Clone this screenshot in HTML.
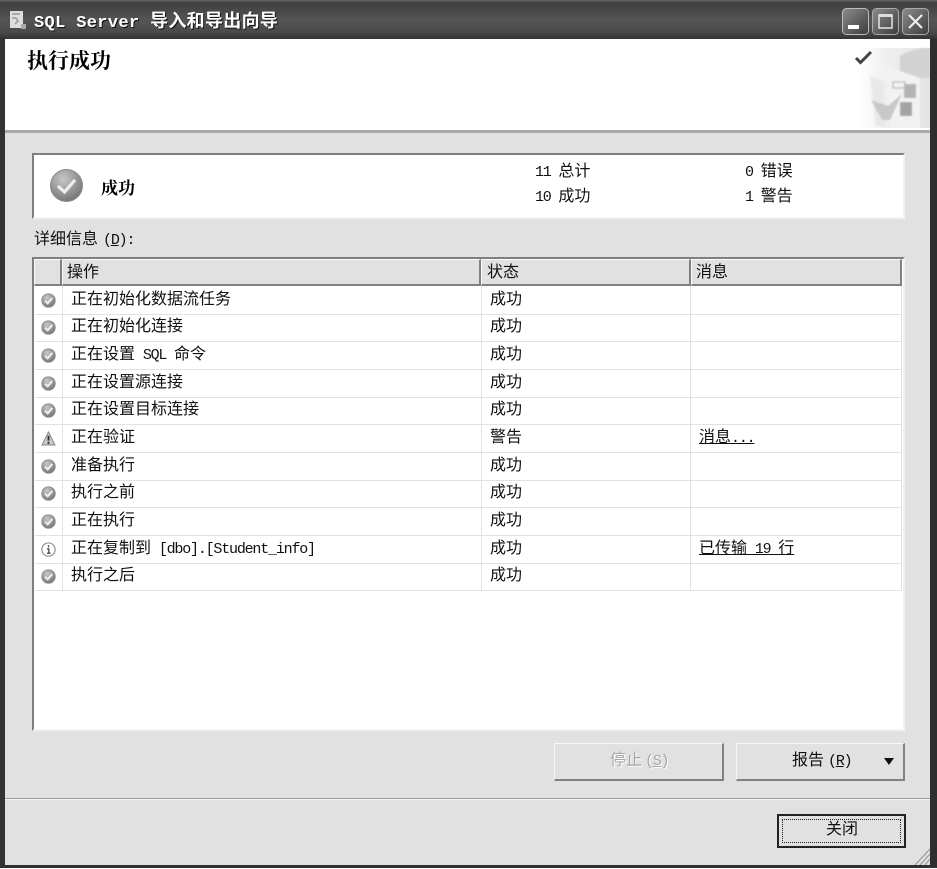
<!DOCTYPE html>
<html><head><meta charset="utf-8">
<style>
html,body{margin:0;padding:0;background:#fff;}
#w{position:relative;width:937px;height:869px;overflow:hidden;background:#e1e1e1;font-family:"Liberation Mono","WenQuanYi Zen Hei","Noto Sans CJK SC",monospace;font-size:16px;line-height:18px;color:#111;}
.a{position:absolute;}
.t{position:absolute;white-space:pre;font-size:16px;height:18px;}
.l{font-size:15px;letter-spacing:-1.2px;}
.hl{position:absolute;left:35px;width:866px;height:1px;background:#e2e2e2;}
.ic{position:absolute;left:41px;width:15px;height:15px;}
.h{position:absolute;top:259px;height:27px;background:#e1e1e1;box-sizing:border-box;border-top:1px solid #fafafa;border-left:1px solid #fafafa;border-right:2px solid #808080;border-bottom:2px solid #808080;}
u{text-decoration:underline;}
</style></head><body>
<div id="w">
<svg width="0" height="0" style="position:absolute"><defs>
<radialGradient id="g" cx="40%" cy="30%" r="80%"><stop offset="0" stop-color="#c8c8c8"/><stop offset="1" stop-color="#6c6c6c"/></radialGradient>
<g id="ok"><circle cx="7" cy="7" r="6.3" fill="url(#g)" stroke="#8a8a8a" stroke-width=".8"/><path d="M3.8 7.2 6.2 9.6 10.6 4.6" fill="none" stroke="#f0f0f0" stroke-width="1.8"/></g>
</defs></svg>
<!-- frame -->
<div class="a" style="left:0;top:0;width:937px;height:39px;background:linear-gradient(#666 0,#3f3f3f 3px,#454545 8px,#555 20px,#4a4a4a 32px,#333 39px);"></div>
<div class="a" style="left:0;top:39px;width:5px;height:829px;background:#333;"></div>
<div class="a" style="right:0;top:39px;width:7px;height:829px;background:#2e2e2e;"></div>
<div class="a" style="left:0;top:865px;width:937px;height:3px;background:#303030;"></div>
<div class="a" style="left:0;top:868px;width:937px;height:1px;background:#fff;"></div>
<!-- titlebar -->
<svg class="a" style="left:9px;top:10px" width="18" height="20"><rect x="1" y="1" width="13" height="17" fill="#ddd"/><path d="M3 4h8M3 8h4l2 3-3 3" stroke="#999" fill="none" stroke-width="1.5"/><rect x="12" y="14" width="5" height="5" fill="#aaa"/></svg>
<div class="t" style="left:34px;top:13px;color:#fff;font-weight:bold;font-size:18px;line-height:20px;letter-spacing:.3px;text-shadow:1px 1px 0 #111;"><span style="font-size:17px;letter-spacing:.35px">SQL Server </span>导入和导出向导</div>
<!-- buttons -->
<svg class="a" style="left:840px;top:7px" width="90" height="30">
<defs><linearGradient id="b" x1="0" y1="0" x2="1" y2="1"><stop offset="0" stop-color="#8c8c8c"/><stop offset="1" stop-color="#3c3c3c"/></linearGradient></defs>
<rect x="2.5" y="1.5" width="26" height="26" rx="4" fill="url(#b)" stroke="#bbb" stroke-width="1"/>
<rect x="8" y="18" width="11" height="4" fill="#fff"/>
<rect x="32.5" y="1.5" width="26" height="26" rx="4" fill="url(#b)" stroke="#aaa" stroke-width="1"/>
<rect x="39" y="8" width="13" height="13" fill="none" stroke="#ddd" stroke-width="1.6"/><rect x="39" y="7" width="13" height="3" fill="#ddd"/>
<rect x="62.5" y="1.5" width="26" height="26" rx="4" fill="url(#b)" stroke="#aaa" stroke-width="1"/>
<path d="M69 8 82 21M82 8 69 21" stroke="#eee" stroke-width="2.2"/>
</svg>
<!-- header white -->
<div class="a" style="left:5px;top:39px;width:925px;height:91px;background:#fff;"></div>
<div class="a" style="left:5px;top:130px;width:925px;height:3px;background:#aaa;"></div>
<div class="t" style="left:27px;top:50px;font-size:21px;line-height:21px;font-weight:bold;color:#000;font-family:'Noto Serif CJK SC','Liberation Serif',serif;">执行成功</div>
<!-- logo -->
<svg class="a" style="left:854px;top:46px" width="76" height="82">
<defs><linearGradient id="lg" x1="0" x2="1"><stop offset="0" stop-color="#fff"/><stop offset=".4" stop-color="#efefef"/><stop offset="1" stop-color="#e4e4e4"/></linearGradient><filter id="bl"><feGaussianBlur stdDeviation="0.8"/></filter></defs>
<rect x="4" y="2" width="72" height="80" fill="url(#lg)"/>
<g filter="url(#bl)">
<path d="M46 10 Q60 2 76 2 V32 H46 Z" fill="#d2d2d2"/>
<path d="M32 20 66 32 V82 H36 Z" fill="#f2f2f2"/>
<path d="M16 30 30 36 32 80 22 80 Z" fill="#e8e8e8"/>
<path d="M17 54 34 60 48 48 36 74 28 74Z" fill="#c8c8c8"/>
<rect x="39" y="36" width="12" height="6" fill="none" stroke="#aaa"/><rect x="50" y="38" width="12" height="14" fill="#b4b4b4"/>
<rect x="46" y="56" width="12" height="14" fill="#a4a4a4"/>
</g>
<path d="M2 12 6.5 16.5 17 6" fill="none" stroke="#444" stroke-width="3"/>
</svg>
<!-- summary -->
<div class="a" style="left:32px;top:153px;width:873px;height:66px;background:#fff;box-sizing:border-box;border-top:2px solid #7f7f7f;border-left:2px solid #7f7f7f;border-right:2px solid #f2f2f2;border-bottom:2px solid #f2f2f2;"></div>
<svg class="a" style="left:49px;top:168px" width="36" height="36"><circle cx="17.5" cy="17.5" r="16" fill="url(#g)" stroke="#8a8a8a"/><path d="M9 18 15.5 24 26 12" fill="none" stroke="#eee" stroke-width="3.2"/></svg>
<div class="t" style="left:101px;top:178px;font-size:17px;font-weight:bold;font-family:'Noto Serif CJK SC',serif;color:#000;">成功</div>
<div class="t" style="left:535px;top:163px;"><span class="l">11 </span>总计</div>
<div class="t" style="left:535px;top:188px;"><span class="l">10 </span>成功</div>
<div class="t" style="left:745px;top:163px;"><span class="l">0 </span>错误</div>
<div class="t" style="left:745px;top:188px;"><span class="l">1 </span>警告</div>
<div class="t" style="left:34px;top:231px;">详细信息<span class="l" style="margin-left:5px">(<u>D</u>):</span></div>
<!-- table -->
<div class="a" style="left:32px;top:257px;width:873px;height:474px;background:#fff;box-sizing:border-box;border-top:2px solid #7f7f7f;border-left:2px solid #7f7f7f;border-right:2px solid #f2f2f2;border-bottom:2px solid #f2f2f2;"></div>
<div class="h" style="left:34px;width:28px;"></div>
<div class="h" style="left:62px;width:419px;"></div>
<div class="h" style="left:481px;width:210px;"></div>
<div class="h" style="left:691px;width:211px;"></div>
<div class="t" style="left:67px;top:264px;">操作</div>
<div class="t" style="left:487px;top:264px;">状态</div>
<div class="t" style="left:696px;top:264px;">消息</div>
<div class="a" style="left:62px;top:286px;width:1px;height:305px;background:#e2e2e2;"></div>
<div class="a" style="left:481px;top:286px;width:1px;height:305px;background:#e2e2e2;"></div>
<div class="a" style="left:690px;top:286px;width:1px;height:305px;background:#e2e2e2;"></div>
<div class="a" style="left:901px;top:286px;width:1px;height:305px;background:#e2e2e2;"></div>
<div class="hl" style="top:314px"></div><div class="hl" style="top:341px"></div><div class="hl" style="top:369px"></div><div class="hl" style="top:397px"></div><div class="hl" style="top:424px"></div><div class="hl" style="top:452px"></div><div class="hl" style="top:480px"></div><div class="hl" style="top:507px"></div><div class="hl" style="top:535px"></div><div class="hl" style="top:563px"></div><div class="hl" style="top:590px"></div>
<!-- icons -->
<svg class="ic" viewBox="0 0 14 14" style="top:293px"><use href="#ok"/></svg>
<svg class="ic" viewBox="0 0 14 14" style="top:320px"><use href="#ok"/></svg>
<svg class="ic" viewBox="0 0 14 14" style="top:348px"><use href="#ok"/></svg>
<svg class="ic" viewBox="0 0 14 14" style="top:376px"><use href="#ok"/></svg>
<svg class="ic" viewBox="0 0 14 14" style="top:403px"><use href="#ok"/></svg>
<svg class="ic" viewBox="0 0 14 14" style="top:431px"><path d="M7 1 13 13H1Z" fill="#ccc" stroke="#888"/><path d="M7 4.5V9M7 10v2" stroke="#333" stroke-width="1.8"/></svg>
<svg class="ic" viewBox="0 0 14 14" style="top:459px"><use href="#ok"/></svg>
<svg class="ic" viewBox="0 0 14 14" style="top:486px"><use href="#ok"/></svg>
<svg class="ic" viewBox="0 0 14 14" style="top:514px"><use href="#ok"/></svg>
<svg class="ic" viewBox="0 0 14 14" style="top:542px"><circle cx="7" cy="7" r="6.2" fill="#fff" stroke="#888"/><path d="M7 3v2M5.5 6.5H7.3V10.5M5.5 10.5h3.5" stroke="#444" stroke-width="1.2" fill="none"/></svg>
<svg class="ic" viewBox="0 0 14 14" style="top:569px"><use href="#ok"/></svg>
<!-- rows -->
<div class="t" style="left:71px;top:291px;">正在初始化数据流任务</div><div class="t" style="left:490px;top:291px;">成功</div>
<div class="t" style="left:71px;top:318px;">正在初始化连接</div><div class="t" style="left:490px;top:318px;">成功</div>
<div class="t" style="left:71px;top:346px;">正在设置<span class="l"> SQL </span>命令</div><div class="t" style="left:490px;top:346px;">成功</div>
<div class="t" style="left:71px;top:374px;">正在设置源连接</div><div class="t" style="left:490px;top:374px;">成功</div>
<div class="t" style="left:71px;top:401px;">正在设置目标连接</div><div class="t" style="left:490px;top:401px;">成功</div>
<div class="t" style="left:71px;top:429px;">正在验证</div><div class="t" style="left:490px;top:429px;">警告</div><div class="t" style="left:699px;top:429px;"><u>消息<span class="l">...</span></u></div>
<div class="t" style="left:71px;top:457px;">准备执行</div><div class="t" style="left:490px;top:457px;">成功</div>
<div class="t" style="left:71px;top:484px;">执行之前</div><div class="t" style="left:490px;top:484px;">成功</div>
<div class="t" style="left:71px;top:512px;">正在执行</div><div class="t" style="left:490px;top:512px;">成功</div>
<div class="t" style="left:71px;top:540px;">正在复制到<span class="l"> [dbo].[Student_info]</span></div><div class="t" style="left:490px;top:540px;">成功</div><div class="t" style="left:699px;top:540px;"><u>已传输<span class="l"> 19 </span>行</u></div>
<div class="t" style="left:71px;top:567px;">执行之后</div><div class="t" style="left:490px;top:567px;">成功</div>
<!-- buttons -->
<div class="a" style="left:554px;top:743px;width:170px;height:38px;box-sizing:border-box;background:#e1e1e1;border-top:1px solid #f6f6f6;border-left:1px solid #f6f6f6;border-right:2px solid #808080;border-bottom:2px solid #808080;"></div>
<div class="t" style="left:610px;top:752px;color:#a6a6a6;text-shadow:1px 1px 0 #fff;">停止<span class="l" style="margin-left:3px">(<u>S</u>)</span></div>
<div class="a" style="left:736px;top:743px;width:169px;height:38px;box-sizing:border-box;background:#e1e1e1;border-top:1px solid #f6f6f6;border-left:1px solid #f6f6f6;border-right:2px solid #808080;border-bottom:2px solid #808080;"></div>
<div class="t" style="left:792px;top:752px;color:#111;">报告<span class="l" style="margin-left:4px">(<u>R</u>)</span></div>
<svg class="a" style="left:883px;top:757px" width="12" height="9"><path d="M1 1H11L6 8Z" fill="#111"/></svg>
<div class="a" style="left:5px;top:798px;width:925px;height:1px;background:#9a9a9a;"></div>
<div class="a" style="left:5px;top:799px;width:925px;height:1px;background:#f4f4f4;"></div>
<div class="a" style="left:777px;top:814px;width:129px;height:34px;box-sizing:border-box;border:2px solid #222;background:#e1e1e1;"></div>
<div class="a" style="left:782px;top:819px;width:119px;height:24px;box-sizing:border-box;border:1px dotted #222;"></div>
<div class="t" style="left:826px;top:821px;color:#111;">关闭</div>
<svg class="a" style="left:914px;top:846px" width="16" height="19"><path d="M1 19 16 3M6 19 16 8M11 19 16 13" stroke="#999" stroke-width="1.2"/></svg>
</div>
</body></html>
